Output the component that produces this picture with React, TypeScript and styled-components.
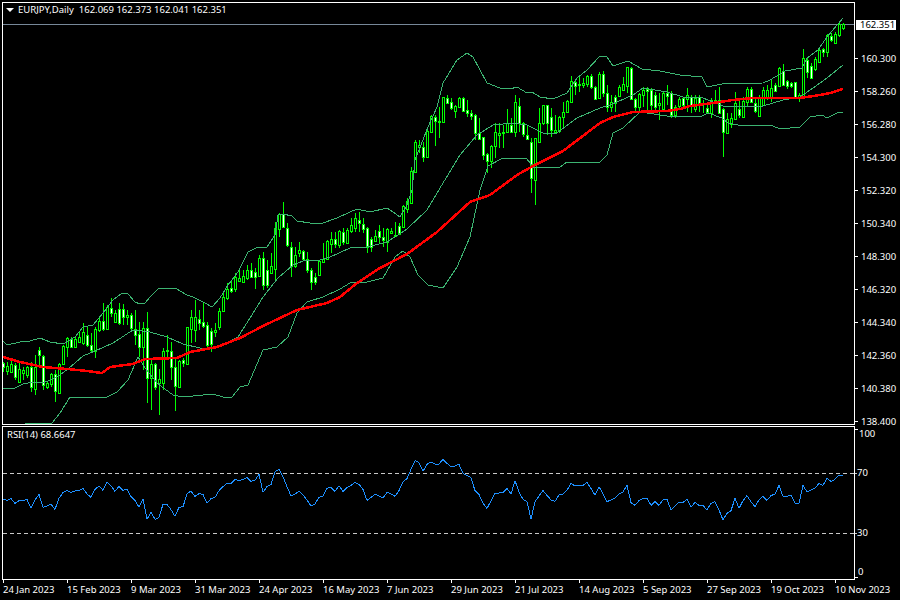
import styled, { createGlobalStyle } from "styled-components";

const GlobalStyle = createGlobalStyle`
  html, body {
    margin: 0;
    padding: 0;
    background: #000;
  }
`;

// [high, bodyTop, bodyBottom, low, bear] read off the chart, y is stored x3 from a section base
type Bar = [number, number, number, number, number];

const sectionA: Bar[] = [
  [245, 250, 262, 275, 1], [245, 258, 272, 285, 0], [240, 252, 275, 280, 0], [250, 255, 290, 300, 1], [250, 268, 305, 310, 0],
  [262, 270, 278, 300, 0], [258, 262, 285, 295, 0], [245, 262, 322, 335, 1], [225, 262, 328, 345, 0], [200, 210, 225, 255, 1],
  [225, 228, 315, 330, 1], [305, 310, 320, 328, 0], [280, 282, 312, 320, 0], [270, 282, 332, 365, 1], [250, 252, 340, 342, 0],
  [195, 198, 252, 255, 0], [170, 175, 200, 230, 0], [170, 178, 200, 205, 1], [170, 178, 200, 205, 0], [155, 172, 185, 190, 0],
  [130, 155, 190, 195, 0], [140, 165, 195, 200, 1], [160, 195, 210, 215, 1], [140, 148, 212, 235, 0], [115, 122, 150, 155, 0],
  [70, 122, 148, 152, 1], [75, 80, 148, 150, 0], [55, 85, 98, 110, 1], [90, 98, 125, 130, 0], [70, 88, 128, 135, 1],
  [72, 88, 110, 135, 1], [90, 105, 110, 135, 0], [100, 105, 145, 150, 1], [90, 148, 165, 195, 1], [125, 162, 200, 230, 1],
  [125, 145, 200, 270, 0], [95, 145, 295, 370, 1], [235, 252, 295, 390, 0], [250, 252, 320, 330, 1], [268, 298, 308, 405, 0],
  [205, 212, 310, 330, 0], [165, 210, 214, 240, 0], [185, 212, 262, 300, 1], [230, 262, 318, 392, 1], [240, 243, 320, 322, 0],
  [235, 240, 250, 260, 1], [140, 142, 252, 255, 0],
];

const sectionB: Bar[] = [
  [360, 380, 418, 460, 0], [330, 380, 420, 455, 0], [360, 388, 400, 420, 1], [340, 397, 407, 415, 1], [395, 405, 465, 470, 1],
  [415, 422, 462, 485, 1], [400, 420, 425, 440, 0], [355, 362, 412, 420, 0], [310, 322, 362, 365, 0], [280, 297, 325, 330, 0],
  [270, 295, 303, 310, 1], [250, 262, 298, 305, 0], [240, 265, 272, 275, 0], [240, 258, 275, 280, 0], [225, 240, 265, 270, 0],
  [220, 240, 262, 265, 1], [235, 247, 260, 297, 1], [195, 205, 258, 262, 0], [185, 205, 285, 300, 1], [210, 240, 285, 295, 1],
  [190, 228, 248, 250, 0], [95, 115, 238, 275, 0], [70, 72, 118, 140, 0], [37, 72, 110, 115, 1], [100, 115, 165, 170, 1],
  [155, 170, 228, 260, 1], [170, 195, 228, 235, 0], [155, 180, 190, 200, 0],
];

const sectionC: Bar[] = [
  [630, 632, 657, 660, 1], [635, 657, 690, 700, 1], [685, 690, 725, 750, 1], [700, 712, 725, 735, 1], [660, 662, 705, 708, 0],
  [610, 658, 665, 667, 0], [600, 604, 658, 660, 0], [575, 598, 612, 640, 0], [575, 598, 613, 625, 1], [570, 574, 615, 625, 0],
  [565, 575, 605, 615, 1], [565, 570, 608, 612, 0], [535, 555, 572, 580, 0], [520, 535, 565, 575, 0], [515, 541, 548, 575, 1],
  [535, 553, 567, 580, 1], [560, 565, 622, 640, 1], [590, 598, 622, 635, 1], [570, 587, 603, 605, 0], [555, 573, 590, 610, 1],
  [565, 592, 600, 620, 1], [565, 568, 605, 635, 0], [565, 572, 578, 582, 0], [545, 585, 588, 590, 0], [550, 558, 582, 585, 1],
  [495, 498, 560, 562, 0], [475, 482, 508, 520, 0], [380, 393, 488, 490, 0], [300, 307, 395, 400, 0], [300, 316, 320, 340, 0],
  [305, 320, 352, 365, 1], [265, 272, 352, 355, 0], [225, 228, 275, 280, 0], [225, 232, 242, 318, 1], [200, 243, 247, 295, 0],
  [170, 172, 247, 250, 0], [165, 175, 188, 190, 1], [175, 187, 205, 210, 1], [195, 198, 212, 235, 0], [170, 175, 200, 205, 0],
  [170, 175, 212, 215, 1], [180, 210, 218, 232, 1], [210, 220, 228, 240, 1], [222, 226, 278, 300, 1], [235, 280, 297, 300, 1],
  [290, 292, 345, 360, 1], [340, 343, 362, 400, 1], [315, 318, 362, 385, 0], [250, 276, 318, 355, 0], [250, 280, 285, 325, 0],
  [255, 275, 280, 325, 0], [208, 250, 275, 280, 0], [235, 255, 275, 280, 1], [165, 187, 275, 290, 0], [175, 197, 248, 275, 1],
  [245, 248, 282, 290, 1], [255, 284, 296, 300, 1], [295, 307, 415, 460, 1], [293, 295, 420, 495, 0], [205, 248, 305, 310, 0],
  [195, 196, 250, 255, 0], [195, 196, 250, 285, 1], [205, 232, 270, 292, 1], [225, 270, 275, 278, 0], [228, 230, 272, 278, 0],
  [185, 215, 232, 260, 0], [180, 184, 215, 218, 0], [108, 122, 185, 188, 0], [118, 125, 138, 165, 1], [110, 132, 136, 155, 1],
  [115, 130, 135, 145, 0], [105, 108, 133, 140, 0], [102, 108, 142, 148, 1], [138, 142, 176, 180, 1],
];

const sectionD: Bar[] = [
  [215, 222, 295, 298, 0], [212, 222, 280, 290, 1], [255, 278, 322, 335, 1], [285, 306, 322, 335, 0], [285, 292, 308, 335, 1],
  [255, 262, 288, 290, 0], [232, 253, 270, 272, 0], [200, 202, 258, 280, 0], [200, 205, 298, 300, 1], [295, 298, 320, 335, 1],
  [280, 282, 322, 335, 0], [262, 270, 285, 320, 0], [262, 268, 272, 330, 1], [265, 270, 316, 335, 1], [275, 286, 322, 335, 1],
  [280, 310, 315, 360, 0], [275, 278, 326, 328, 0], [255, 278, 288, 315, 1], [272, 278, 345, 355, 1], [315, 320, 345, 355, 0],
  [290, 298, 318, 325, 0], [290, 295, 315, 325, 1], [265, 285, 298, 335, 0], [285, 290, 315, 340, 1], [285, 295, 328, 335, 0],
  [285, 292, 310, 335, 1], [300, 308, 312, 340, 0], [310, 325, 335, 340, 1], [295, 300, 338, 355, 0], [270, 300, 310, 312, 1],
  [262, 300, 338, 340, 1], [325, 328, 395, 470, 1], [340, 358, 398, 400, 0], [340, 355, 372, 385, 0], [275, 308, 358, 360, 0],
  [300, 328, 345, 355, 1], [290, 303, 350, 352, 0], [262, 268, 305, 320, 0], [262, 268, 305, 310, 1], [295, 308, 332, 340, 1],
  [285, 290, 347, 348, 0], [260, 270, 316, 318, 0], [255, 270, 290, 300, 0], [240, 264, 290, 305, 0], [250, 255, 272, 275, 1],
  [200, 205, 258, 262, 0], [192, 212, 255, 258, 1], [240, 243, 258, 268, 1], [245, 248, 258, 265, 1], [245, 247, 290, 292, 1],
  [280, 285, 295, 305, 0], [148, 175, 288, 290, 0], [170, 180, 215, 235, 1], [190, 198, 233, 238, 1], [170, 178, 208, 212, 0],
  [145, 150, 185, 190, 0], [145, 148, 155, 170, 1], [103, 105, 155, 170, 0], [100, 108, 120, 125, 1], [95, 103, 128, 130, 0],
  [68, 72, 105, 112, 0], [68, 72, 85, 90, 0],
];

const fromSection = (rows: Bar[], base: number): Bar[] =>
  rows.map(([h, t, b, l, bear]) => [
    Math.round(base + h / 3),
    Math.round(base + t / 3),
    Math.round(base + b / 3),
    Math.round(base + l / 3),
    bear,
  ]);

const bars = [
  ...fromSection(sectionA, 280),
  ...fromSection(sectionB, 190),
  ...fromSection(sectionC, 40),
  ...fromSection(sectionD, 0),
];

const upperBand =
  "3,341 7,345 20,342 30,341 40,338 50,342 63,344 75,337 83,327 93,325 103,313 113,300 122,293 128,294 135,302 140,304 145,303 150,297 158,289 175,288 187,295 193,297 205,303 212,307 220,298 228,285 238,272 248,252 258,247 267,247 275,235 278,215 283,214 292,216 297,221 310,223 323,223 337,218 350,212 357,209 370,212 387,208 393,212 400,217 407,205 412,190 415,160 428,127 437,107 443,83 457,60 467,53 473,57 487,83 500,88 510,89 517,87 527,93 532,92 540,97 553,99 567,93 577,78 587,70 600,56 607,57 613,66 628,61 642,69 660,71 680,75 702,77 707,87 722,84 763,83 770,80 785,71 802,68 807,58 818,50 827,37 843,18";
const middleBand =
  "3,388 13,389 23,384 33,382 43,383 57,377 68,369 83,356 95,351 113,343 133,330 150,332 167,337 183,344 200,348 213,349 227,343 238,337 250,318 263,297 278,278 293,265 303,261 320,260 330,257 350,248 367,247 387,242 407,229 427,210 443,183 460,155 477,135 493,125 513,123 527,125 543,133 557,133 577,118 600,108 610,105 633,95 643,88 667,92 683,97 703,98 723,106 743,107 763,106 783,100 800,97 813,88 827,78 843,65";
const lowerBand =
  "25,423 52,423 60,413 70,397 83,397 107,397 117,392 128,380 138,357 145,368 157,383 173,395 183,397 213,394 223,397 232,397 240,387 248,385 263,350 277,347 288,337 297,313 307,302 323,297 340,289 350,283 367,282 383,278 395,257 403,251 410,257 418,275 428,285 443,288 457,267 470,237 480,190 488,166 503,158 527,159 533,167 560,167 567,162 583,163 600,162 607,155 613,133 623,128 640,112 667,116 700,117 708,113 722,118 728,123 738,125 773,126 780,129 800,127 810,117 822,115 827,118 837,113 843,112";
const movingAverage =
  "3,357 20,362 43,367 67,369 87,371 102,373 110,367 133,364 145,359 177,358 190,352 217,347 240,338 265,325 297,310 327,303 340,297 357,283 380,268 407,254 437,232 470,202 490,195 517,175 533,166 563,151 600,123 613,117 633,112 667,111 680,109 690,106 713,103 733,100 753,98 800,98 820,95 830,93 843,89";

const rsiRows = [
  238, 241, 236, 250, 242, 243, 238, 265, 240, 223, 262, 258, 252, 268, 235, 218, 211, 217, 213, 211, 205, 222, 232, 208, 198,
  211, 187, 197, 214, 199, 211, 208, 230, 241, 262, 236, 298, 277, 298, 292, 253, 253, 269, 289, 262, 260, 222, 213, 229, 221,
  223, 250, 236, 232, 212, 200, 190, 190, 178, 183, 178, 172, 184, 181, 163, 217, 200, 194, 155, 148, 170, 200, 228, 222, 214,
  225, 240, 258, 252, 232, 228, 205, 202, 214, 197, 214, 203, 196, 187, 193, 208, 241, 232, 223, 228, 234, 217, 222, 229, 212,
  185, 176, 148, 122, 128, 154, 133, 126, 132, 132, 118, 130, 141, 138, 133, 160, 166, 173, 212, 223, 250, 265, 243, 219, 219,
  217, 205, 222, 182, 216, 238, 245, 297, 245, 228, 212, 226, 240, 244, 225, 222, 211, 190, 198, 196, 196, 187, 205, 226, 200,
  222, 245, 240, 235, 222, 216, 196, 248, 256, 242, 235, 235, 256, 244, 256, 240, 238, 270, 258, 247, 247, 238, 262, 247, 256,
  256, 270, 250, 245, 270, 300, 280, 272, 235, 265, 242, 227, 245, 260, 240, 229, 241, 227, 222, 196, 229, 229, 225, 250, 250,
  196, 216, 210, 205, 190, 196, 175, 184, 178, 165, 165,
];

const rsiLine = rsiRows.map((v, i) => `${3 + 4 * i},${420 + v / 3}`).join(" ");

const priceLabels = [
  "160.300", "158.260", "156.280", "154.300", "152.320", "150.340",
  "148.300", "146.320", "144.340", "142.360", "140.380", "138.400",
];

const rsiLabels = [
  { text: "100", h: 17, pad: 4, dash: false },
  { text: "70", h: 62, pad: 0, dash: true },
  { text: "30", h: 58, pad: 0, dash: true },
  { text: "0", h: 20, pad: 3, dash: false },
];

const dates = [
  "24 Jan 2023", "15 Feb 2023", "9 Mar 2023", "31 Mar 2023", "24 Apr 2023", "16 May 2023", "7 Jun 2023",
  "29 Jun 2023", "21 Jul 2023", "14 Aug 2023", "5 Sep 2023", "27 Sep 2023", "19 Oct 2023", "10 Nov 2023",
];

const Screen = styled.div`
  width: 900px;
  height: 600px;
  overflow: hidden;
  box-sizing: border-box;
  padding: 2px 0 0 2px;
  background: #000;
  color: #fff;
  font-family: "Noto Sans", "Liberation Sans", Arial, sans-serif;
  font-size: 9.5px;
  line-height: 10px;
  display: grid;
  grid-template-columns: 853px 45px;
  grid-template-rows: 423px 155px 20px;
`;

const Pane = styled.div`
  position: relative;
  box-sizing: border-box;
  border: 1px solid #fff;
  background: #000;
  overflow: hidden;
`;

const RsiPane = styled(Pane)`
  height: 154px;
  margin-top: 1px;
`;

const Plot = styled.svg`
  display: block;
`;

const Legend = styled.div`
  position: absolute;
  left: 3px;
  top: 2px;
  display: flex;
  align-items: center;
  gap: 4px;
  white-space: pre;
`;

const LegendArrow = styled.span`
  width: 0;
  height: 0;
  border-left: 4px solid transparent;
  border-right: 4px solid transparent;
  border-top: 4px solid #fff;
`;

const RsiLegend = styled.div`
  position: absolute;
  left: 4px;
  top: 3px;
  white-space: pre;
`;

const PriceAxis = styled.div`
  position: relative;
  display: flex;
  flex-direction: column;
  padding-top: 40px;
`;

const RsiAxis = styled.div`
  position: relative;
  display: flex;
  flex-direction: column;
`;

const AxisRow = styled.div`
  display: flex;
  align-items: center;
  gap: 3px;
  flex: none;
  height: 33px;

  &::before {
    content: "";
    width: 3px;
    height: 1px;
    background: #fff;
  }
`;

const RsiRow = styled.div<{ $h: number; $pad: number; $dash: boolean }>`
  display: flex;
  align-items: center;
  flex: none;
  height: ${(p) => p.$h}px;
  padding-left: ${(p) => p.$pad}px;

  ${(p) =>
    p.$dash &&
    `
    &::before {
      content: "";
      width: 2px;
      height: 1px;
      background: #c8c8c8;
    }
  `}
`;

const RsiTick = styled.span<{ $y: number }>`
  position: absolute;
  left: 0;
  top: ${(p) => p.$y}px;
  width: 3px;
  height: 1px;
  background: #fff;
`;

const PriceTag = styled.div`
  position: absolute;
  left: 1px;
  top: 18px;
  width: 40px;
  height: 10px;
  padding-left: 4px;
  box-sizing: border-box;
  background: #fff;
  color: #000;
`;

const TimeAxis = styled.div`
  grid-column: 1 / 3;
  display: flex;
  padding-left: 1px;
`;

const TimeCell = styled.div`
  flex: none;
  width: 64px;
  white-space: nowrap;

  &::before {
    content: "";
    display: block;
    width: 1px;
    height: 3px;
    margin-bottom: 2px;
    background: #fff;
  }
`;

function Candles() {
  return (
    <g>
      {bars.map(([high, top, bottom, low, bear], i) => {
        const x = 3 + 4 * i;
        return (
          <g key={i}>
            <line x1={x + 0.5} x2={x + 0.5} y1={high} y2={low} stroke="#00ff00" />
            <rect
              x={x - 0.5}
              y={top + 0.5}
              width={2}
              height={Math.max(bottom - top, 1)}
              fill={bear ? "#fff" : "#000"}
              stroke="#00ff00"
            />
          </g>
        );
      })}
    </g>
  );
}

function MainChart() {
  return (
    <Plot width={851} height={421} viewBox="3 3 851 421" shapeRendering="crispEdges">
      <line x1={3} x2={854} y1={24.5} y2={24.5} stroke="#778899" />
      <Candles />
      <g fill="none" stroke="#3cb371">
        <polyline points={upperBand} />
        <polyline points={middleBand} />
        <polyline points={lowerBand} />
      </g>
      <polyline points={movingAverage} fill="none" stroke="#ff0000" strokeWidth={2.5} />
    </Plot>
  );
}

function RsiChart() {
  return (
    <Plot width={851} height={152} viewBox="3 427 851 152" shapeRendering="crispEdges">
      <g stroke="#c8c8c8" strokeDasharray="4 3">
        <line x1={3} x2={854} y1={473.5} y2={473.5} />
        <line x1={3} x2={854} y1={533.5} y2={533.5} />
      </g>
      <polyline points={rsiLine} fill="none" stroke="#1e90ff" />
    </Plot>
  );
}

export default function App() {
  return (
    <>
      <GlobalStyle />
      <Screen>
        <Pane>
          <MainChart />
          <Legend>
            <LegendArrow />
            <span>EURJPY,Daily  162.069 162.373 162.041 162.351</span>
          </Legend>
        </Pane>
        <PriceAxis>
          {priceLabels.map((label) => (
            <AxisRow key={label}>{label}</AxisRow>
          ))}
          <PriceTag>162.351</PriceTag>
        </PriceAxis>
        <RsiPane>
          <RsiChart />
          <RsiLegend>RSI(14) 68.6647</RsiLegend>
        </RsiPane>
        <RsiAxis>
          {rsiLabels.map((label) => (
            <RsiRow key={label.text} $h={label.h} $pad={label.pad} $dash={label.dash}>
              {label.text}
            </RsiRow>
          ))}
          <RsiTick $y={4} />
          <RsiTick $y={152} />
        </RsiAxis>
        <TimeAxis>
          {dates.map((date) => (
            <TimeCell key={date}>{date}</TimeCell>
          ))}
        </TimeAxis>
      </Screen>
    </>
  );
}
